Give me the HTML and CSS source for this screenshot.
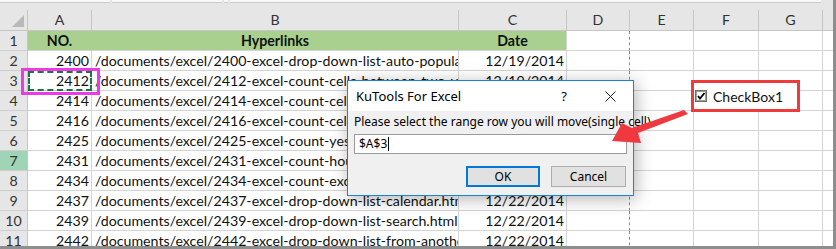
FILE: index.html
```html
<!DOCTYPE html>
<html lang="en">
<head>
  <meta charset="UTF-8" />
  <title>KuTools For Excel - move row</title>
  <link rel="stylesheet" href="styles.css">
</head>
<body>

<div id="screen">
  <div class="ribbon-edge">
    <span class="seg" style="width:110px"></span>
    <span class="seg" style="width:110px"></span>
    <span class="seg" style="width:4px"></span>
    <span class="seg seg-long"></span>
  </div>

  <div class="row head">
    <div class="cell corner">
      <svg width="12" height="12" viewBox="0 0 12 12"><polygon points="0,12 12,12 12,0" fill="#b9b9b9"/></svg>
    </div>
    <div class="cell">A</div>
    <div class="cell">B</div>
    <div class="cell">C</div>
    <div class="cell">D</div>
    <div class="cell">E</div>
    <div class="cell">F</div>
    <div class="cell">G</div>
    <div class="cell last"></div>
  </div>

  <div class="row">
    <div class="cell rh">1</div>
    <div class="cell fill bold center">NO.</div>
    <div class="cell fill bold center">Hyperlinks</div>
    <div class="cell fill fill-end bold center">Date</div>
    <div class="cell pb"></div><div class="cell"></div><div class="cell"></div><div class="cell"></div><div class="cell last"></div>
  </div>
  <div class="row">
    <div class="cell rh">2</div>
    <div class="cell num">2400</div>
    <div class="cell">/documents/excel/2400-excel-drop-down-list-auto-populate.html</div>
    <div class="cell num">12/19/2014</div>
    <div class="cell pb"></div><div class="cell"></div><div class="cell"></div><div class="cell"></div><div class="cell last"></div>
  </div>
  <div class="row">
    <div class="cell rh">3</div>
    <div class="cell num copied">2412</div>
    <div class="cell">/documents/excel/2412-excel-count-cells-between-two-values.html</div>
    <div class="cell num">12/19/2014</div>
    <div class="cell pb"></div><div class="cell"></div><div class="cell"></div><div class="cell"></div><div class="cell last"></div>
  </div>
  <div class="row">
    <div class="cell rh">4</div>
    <div class="cell num">2414</div>
    <div class="cell">/documents/excel/2414-excel-count-cells-by-color.html</div>
    <div class="cell num">12/19/2014</div>
    <div class="cell pb"></div><div class="cell"></div><div class="cell"></div><div class="cell"></div><div class="cell last"></div>
  </div>
  <div class="row">
    <div class="cell rh">5</div>
    <div class="cell num">2416</div>
    <div class="cell">/documents/excel/2416-excel-count-cells-with-text.html</div>
    <div class="cell num">12/19/2014</div>
    <div class="cell pb"></div><div class="cell"></div><div class="cell"></div><div class="cell"></div><div class="cell last"></div>
  </div>
  <div class="row">
    <div class="cell rh">6</div>
    <div class="cell num">2425</div>
    <div class="cell">/documents/excel/2425-excel-count-yes-no.html</div>
    <div class="cell num">12/20/2014</div>
    <div class="cell pb"></div><div class="cell"></div><div class="cell"></div><div class="cell"></div><div class="cell last"></div>
  </div>
  <div class="row">
    <div class="cell rh active">7</div>
    <div class="cell num">2431</div>
    <div class="cell">/documents/excel/2431-excel-count-hours.html</div>
    <div class="cell num">12/20/2014</div>
    <div class="cell pb"></div><div class="cell"></div><div class="cell"></div><div class="cell"></div><div class="cell last"></div>
  </div>
  <div class="row">
    <div class="cell rh">8</div>
    <div class="cell num">2434</div>
    <div class="cell">/documents/excel/2434-excel-count-excluding-hidden.html</div>
    <div class="cell num">12/22/2014</div>
    <div class="cell pb"></div><div class="cell"></div><div class="cell"></div><div class="cell"></div><div class="cell last"></div>
  </div>
  <div class="row">
    <div class="cell rh">9</div>
    <div class="cell num">2437</div>
    <div class="cell">/documents/excel/2437-excel-drop-down-list-calendar.html</div>
    <div class="cell num">12/22/2014</div>
    <div class="cell pb"></div><div class="cell"></div><div class="cell"></div><div class="cell"></div><div class="cell last"></div>
  </div>
  <div class="row">
    <div class="cell rh">10</div>
    <div class="cell num">2439</div>
    <div class="cell">/documents/excel/2439-excel-drop-down-list-search.html</div>
    <div class="cell num">12/22/2014</div>
    <div class="cell pb"></div><div class="cell"></div><div class="cell"></div><div class="cell"></div><div class="cell last"></div>
  </div>
  <div class="row">
    <div class="cell rh">11</div>
    <div class="cell num">2442</div>
    <div class="cell">/documents/excel/2442-excel-drop-down-list-from-another-sheet.html</div>
    <div class="cell num">12/22/2014</div>
    <div class="cell pb"></div><div class="cell"></div><div class="cell"></div><div class="cell"></div><div class="cell last"></div>
  </div>

  <!-- overlays -->
  <div class="mark"></div>

  <div class="checkbox-ctl">
    <svg width="12" height="12" viewBox="0 0 12 12">
      <rect x="0.5" y="0.5" width="11" height="11" fill="#e8e8e8" stroke="#6d6d6d"/>
      <rect x="1.5" y="1.5" width="9" height="9" fill="#fff" stroke="#a0a0a0"/>
      <path d="M3 6 L5 8.5 L9.5 3" fill="none" stroke="#000" stroke-width="1.8"/>
    </svg>
    <span>CheckBox1</span>
  </div>

  <div class="dialog">
    <div class="dialog-title">
      <span class="dialog-caption">KuTools For Excel</span>
      <span class="title-btn">?</span>
      <span class="title-btn">
        <svg width="11" height="11" viewBox="0 0 11 11"><path d="M0.5 0.5 L10.5 10.5 M10.5 0.5 L0.5 10.5" stroke="#222" stroke-width="1"/></svg>
      </span>
    </div>
    <div class="dialog-body">
      <div class="dialog-label">Please select the range row you will move(single cell)</div>
      <div class="dialog-input">$A$3<span class="caret"></span></div>
      <div class="dialog-buttons">
        <span class="btn btn-default">OK</span>
        <span class="btn">Cancel</span>
      </div>
    </div>
  </div>

  <svg class="arrow" width="833" height="246" viewBox="0 0 833 246">
    <polygon points="684,110 688,114 638,133 641,143 612,141 622,123 632,128" fill="#f0393f"/>
  </svg>
</div>

</body>
</html>
```

FILE: styles.css
```css
body {
  margin: 0;
  background: #fff;
}
#screen {
  position: relative;
  width: 833px;
  height: 246px;
  overflow: hidden;
  border-right: 3px solid #8e8e8e;
  border-bottom: 3px solid #8e8e8e;
  background: #fff;
  font-family: "Lato", "Liberation Sans", sans-serif;
  font-size: 14.2px;
  color: #111;
}
.ribbon-edge {
  height: 10px;
  background: #e6e6e6;
  display: flex;
  gap: 2px;
}
.seg {
  height: 2px;
  background: #f8f8f8;
  border-bottom: 1px solid #c9c9c9;
}
.seg-long {
  flex: 1;
  margin-right: 12px;
}
.row {
  display: grid;
  grid-template-columns: 28px 64px 367px 108px 63px 64px 65px 64px 10px;
  height: 20px;
}
.cell {
  box-sizing: border-box;
  border-right: 1px solid #d4d4d4;
  border-bottom: 1px solid #d4d4d4;
  padding: 0 3px;
  line-height: 19px;
  white-space: nowrap;
  overflow: hidden;
}
.cell.last {
  border-right: none;
}
.head {
  height: 21px;
}
.head .cell {
  background: #e6e6e6;
  border-right-color: #c6c6c6;
  border-bottom-color: #c6c6c6;
  text-align: center;
  color: #333;
  line-height: 20px;
}
.head .corner {
  display: flex;
  justify-content: flex-end;
  align-items: flex-end;
  padding: 0 3px 3px 0;
}
.rh {
  background: #e6e6e6;
  border-right-color: #c6c6c6;
  border-bottom-color: #cfcfcf;
  text-align: center;
  color: #333;
  padding: 0;
}
.rh.active {
  background: #9fd5b6;
}
.fill {
  background: #a9d08e;
  border-right-color: #a9d08e;
}
.fill-end {
  border-right-color: #d4d4d4;
}
.bold {
  font-weight: bold;
}
.center {
  text-align: center;
}
.num {
  text-align: right;
  padding-right: 2px;
}
.pb {
  border-right: 1px dashed #8a8a8a;
}
.head .pb {
  border-right: 1px solid #c6c6c6;
}
.copied {
  outline: 2px dashed #217346;
  outline-offset: -2px;
}

/* overlays */
.mark {
  position: absolute;
  left: 21px;
  top: 68px;
  width: 73px;
  height: 21px;
  border: 3px solid #ee3ae6;
}
.checkbox-ctl {
  position: absolute;
  left: 691px;
  top: 80px;
  width: 102px;
  height: 26px;
  border: 3px solid #f03b3b;
  background: #fff;
  display: flex;
  align-items: center;
  gap: 6px;
  padding-left: 1px;
  font-size: 14px;
  color: #111;
}
.dialog {
  position: absolute;
  left: 347px;
  top: 80px;
  width: 287px;
  height: 116px;
  box-sizing: border-box;
  border: 1px solid #1883d7;
  background: #f0f0f0;
  box-shadow: 2px 3px 16px rgba(0, 0, 0, 0.3);
  font-family: "Noto Sans", "DejaVu Sans", sans-serif;
  font-size: 12px;
  color: #000;
}
.dialog-title {
  height: 30px;
  background: #fff;
  display: flex;
  align-items: center;
  padding-left: 8px;
}
.dialog-caption {
  flex: 1;
  font-size: 13px;
}
.title-btn {
  width: 46px;
  height: 30px;
  display: flex;
  align-items: center;
  justify-content: center;
  font-size: 13px;
}
.dialog-body {
  padding: 3px 6px 0 6px;
  display: flex;
  flex-direction: column;
}
.dialog-label {
  height: 16px;
  line-height: 16px;
  white-space: nowrap;
}
.dialog-input {
  margin-top: 4px;
  height: 20px;
  box-sizing: border-box;
  border: 1px solid #9a9a9a;
  background: #fff;
  padding-left: 4px;
  line-height: 18px;
  display: flex;
  align-items: center;
}
.caret {
  width: 1px;
  height: 14px;
  background: #000;
  margin-left: 1px;
}
.dialog-buttons {
  margin-top: 12px;
  display: flex;
  justify-content: flex-end;
  gap: 11px;
  padding-right: 1px;
}
.btn {
  width: 75px;
  height: 21px;
  box-sizing: border-box;
  border: 1px solid #adadad;
  background: #e1e1e1;
  display: flex;
  align-items: center;
  justify-content: center;
}
.btn-default {
  width: 74px;
  border: 2px solid #0078d7;
}
.arrow {
  position: absolute;
  left: 0;
  top: 0;
}
```
